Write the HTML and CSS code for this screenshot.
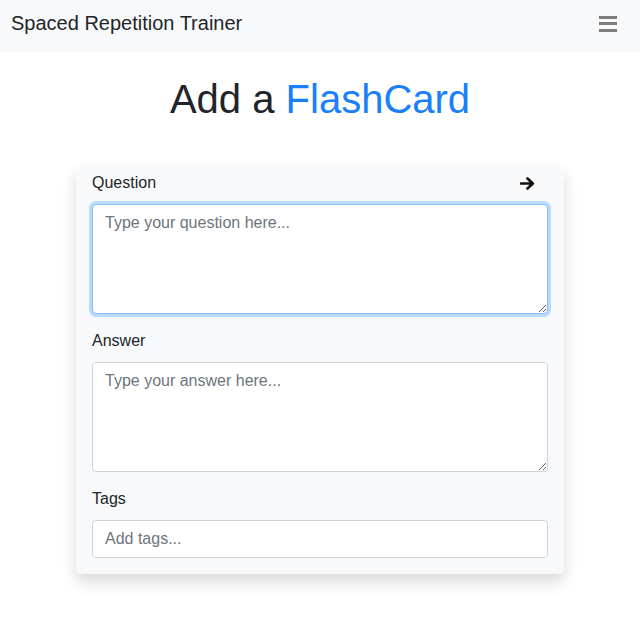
FILE: index.html
```html
<!DOCTYPE html>
<html lang="en">
<head>
<meta charset="utf-8">
<title>Spaced Repetition Trainer</title>
<link rel="stylesheet" href="styles.css">
</head>
<body>
<nav class="navbar">
  <span class="brand">Spaced Repetition Trainer</span>
  <button class="menu" aria-label="Menu">
    <svg width="18" height="16" viewBox="0 0 18 16"><rect x="0" y="0" width="18" height="3" fill="#7d7d7d"/><rect x="0" y="6" width="18" height="3" fill="#7d7d7d"/><rect x="0" y="13" width="18" height="3" fill="#7d7d7d"/></svg>
  </button>
</nav>
<main class="main">
  <h1 class="title">Add a <span class="accent">FlashCard</span></h1>
  <form class="card">
    <div class="group">
      <div class="label-row">
        <label class="label" for="q">Question</label>
        <svg class="arrow" width="15" height="13" viewBox="0 0 15 13"><path d="M1 6.5H12.5M7.5 1.5L12.8 6.5L7.5 11.5" fill="none" stroke="#111" stroke-width="2.6" stroke-linecap="round" stroke-linejoin="round"/></svg>
      </div>
      <textarea id="q" class="field area focused" rows="4" placeholder="Type your question here..." autofocus></textarea>
    </div>
    <div class="group">
      <div class="label-row"><label class="label" for="a">Answer</label></div>
      <textarea id="a" class="field area" rows="4" placeholder="Type your answer here..."></textarea>
    </div>
    <div class="group last">
      <div class="label-row"><label class="label" for="t">Tags</label></div>
      <input id="t" class="field" type="text" placeholder="Add tags...">
    </div>
  </form>
</main>
</body>
</html>
```
FILE: styles.css
```css
* { box-sizing: border-box; }
html, body { margin: 0; padding: 0; }
body {
  font-family: "Liberation Sans", Arial, sans-serif;
  color: #212529;
  background: #fff;
  font-size: 16px;
  line-height: 1.5;
}
.navbar {
  height: 52px;
  background: #f8f9fa;
  display: flex;
  justify-content: space-between;
  align-items: flex-start;
  padding: 8px 23px 0 11px;
}
.brand {
  font-size: 20px;
  line-height: 30px;
  color: #212529;
}
.menu {
  border: 0;
  background: none;
  padding: 0;
  margin-top: 8px;
  width: 18px;
  height: 16px;
  display: block;
}
.menu svg { display: block; }
.main {
  display: flex;
  flex-direction: column;
  align-items: center;
  padding-bottom: 30px;
}
.title {
  margin: 23px 0 43px;
  font-size: 40px;
  font-weight: 400;
  line-height: 48px;
  color: #212529;
}
.accent { color: #1a7ffb; }
.card {
  width: 488px;
  background: #f8f9fa;
  border-radius: 5px;
  box-shadow: 0 8px 16px rgba(0,0,0,.15);
  padding: 5px 16px 16px;
  display: flex;
  flex-direction: column;
  gap: 15px;
}
.label-row {
  display: flex;
  justify-content: space-between;
  align-items: center;
  height: 24px;
  margin-bottom: 9px;
}
.label { font-size: 16px; line-height: 24px; }
.arrow { display: block; margin-right: 13px; margin-top: 0; }
.field {
  display: block;
  width: 100%;
  font-family: inherit;
  font-size: 16px;
  line-height: 24px;
  color: #495057;
  background: #fff;
  border: 1px solid #ced4da;
  border-radius: 4px;
  padding: 6px 12px;
  height: 38px;
  outline: none;
}
.area { height: 110px; resize: vertical; }
.field::placeholder { color: #6c757d; opacity: 1; }
.focused, .field:focus {
  border-color: #80bdff;
  box-shadow: 0 0 0 3px rgba(0,123,255,.25);
}
```
